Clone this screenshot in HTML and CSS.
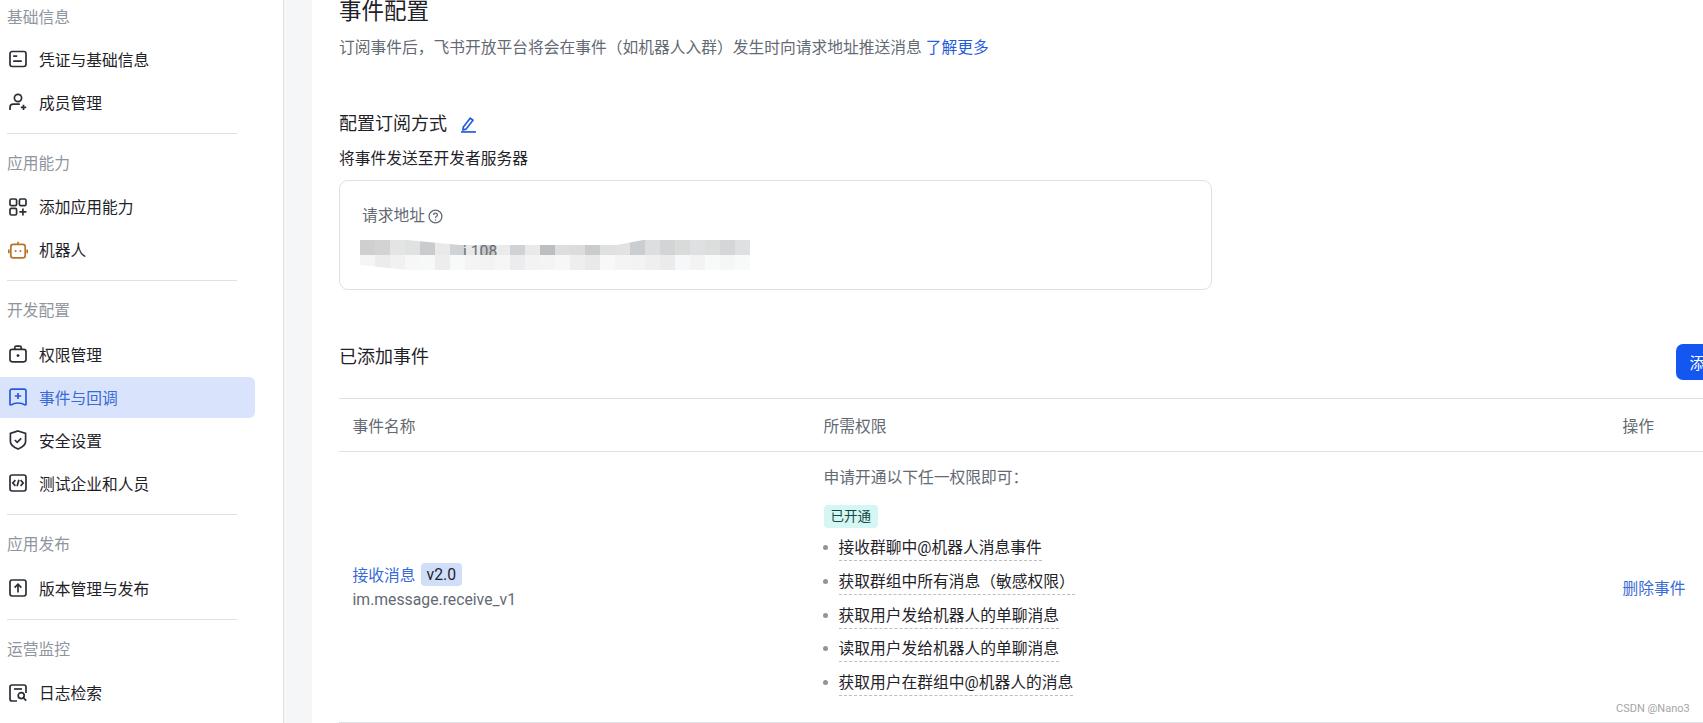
FILE: index.html
```html
<!DOCTYPE html>
<html lang="zh-CN">
<head>
  <meta charset="UTF-8">
  <title>事件配置</title>
  <link rel="stylesheet" href="styles.css">
</head>
<body>

<aside class="sidebar">
  <div class="nav-label">基础信息</div>
  <a class="nav-item">
    <svg class="nav-icon" viewBox="0 0 18 18"><rect x="1" y="1.5" width="16" height="15" rx="2.2"/><path d="M4.2 6.2h4M4.2 11.2h8.6"/></svg>
    凭证与基础信息
  </a>
  <a class="nav-item">
    <svg class="nav-icon" viewBox="0 0 18 18"><circle cx="9" cy="5" r="3.6"/><path d="M1 17v-2.6c0-2 1.6-3.2 3.4-3.2h6.4M11.8 14.4h5.4M14.5 11.8v5.2"/></svg>
    成员管理
  </a>
  <hr class="nav-line">

  <div class="nav-label">应用能力</div>
  <a class="nav-item">
    <svg class="nav-icon" viewBox="0 0 18 18"><rect x="1" y="1" width="6.6" height="6.6" rx="1.4"/><rect x="10.4" y="1" width="6.6" height="6.6" rx="1.4"/><rect x="1" y="10.4" width="6.6" height="6.6" rx="1.4"/><path d="M10.4 13.8h7M13.9 10.4v7"/></svg>
    添加应用能力
  </a>
  <a class="nav-item">
    <svg class="nav-icon nav-icon-bot" viewBox="0 0 20 18"><rect x="2.8" y="3.4" width="14.4" height="13.4" rx="2.4"/><path d="M10 .8v2.6M.8 8.6v3.6M19.2 8.6v3.6"/><circle class="dot" cx="7.6" cy="10" r="1"/><circle class="dot" cx="12.4" cy="10" r="1"/></svg>
    机器人
  </a>
  <hr class="nav-line">

  <div class="nav-label">开发配置</div>
  <a class="nav-item">
    <svg class="nav-icon" viewBox="0 0 18 18"><rect x="1" y="4.4" width="16" height="12.4" rx="2.2"/><path d="M5.8 4.4V2.6c0-.9.6-1.5 1.5-1.5h3.4c.9 0 1.5.6 1.5 1.5v1.8"/><circle class="dot" cx="9" cy="10.6" r="1.4"/></svg>
    权限管理
  </a>
  <a class="nav-item nav-item-active">
    <svg class="nav-icon" viewBox="0 0 18 18"><path d="M1 3c0-1.1.8-1.9 1.9-1.9h12.2c1.1 0 1.9.8 1.9 1.9v13.6l-1.2.3c-1.8-1.3-3.7-1.9-6.8-1.9s-5 .6-6.8 1.9L1 16.6z"/><path d="M5.8 8h6.4M9 4.9v6.2"/></svg>
    事件与回调
  </a>
  <a class="nav-item">
    <svg class="nav-icon nav-icon-shield" viewBox="0 0 18 20"><path d="M9 1l7.6 2.4v8c0 3.4-3.4 5.8-7.6 7.6-4.2-1.8-7.6-4.2-7.6-7.6v-8z"/><path d="M5.8 10l2.4 2.3 4-4"/></svg>
    安全设置
  </a>
  <a class="nav-item">
    <svg class="nav-icon" viewBox="0 0 18 18"><rect x="1" y="1" width="16" height="16" rx="2.2"/><path d="M6.4 6.2L3.8 9l2.6 2.8M11.6 6.2L14.2 9l-2.6 2.8M9.9 5.8L8.1 12.2"/></svg>
    测试企业和人员
  </a>
  <hr class="nav-line">

  <div class="nav-label">应用发布</div>
  <a class="nav-item">
    <svg class="nav-icon" viewBox="0 0 18 18"><rect x="1" y="1" width="16" height="16" rx="2.2"/><path d="M9 13.4V5.4M5.6 8.6L9 5.2l3.4 3.4"/></svg>
    版本管理与发布
  </a>
  <hr class="nav-line">

  <div class="nav-label">运营监控</div>
  <a class="nav-item">
    <svg class="nav-icon" viewBox="0 0 18 18"><path d="M8 17H3c-1.2 0-2-.8-2-2V3c0-1.2.8-2 2-2h12c1.2 0 2 .8 2 2v6"/><path d="M5 5h8"/><circle cx="12.2" cy="11.6" r="3"/><path d="M14.4 13.8l2.8 2.8"/></svg>
    日志检索
  </a>
</aside>

<div class="gutter"></div>

<main class="main">
  <div class="content">
    <h1 class="page-title">事件配置</h1>
    <p class="page-desc">订阅事件后，飞书开放平台将会在事件（如机器人入群）发生时向请求地址推送消息 <a class="link">了解更多</a></p>

    <h2 class="section-title">配置订阅方式
      <svg class="edit-icon" viewBox="0 0 16 16"><path d="M3 10.6L9.6 2l2.6 2-6.6 8.4-2.8.6z"/><path d="M1 15h14"/></svg>
    </h2>
    <p class="send-mode">将事件发送至开发者服务器</p>

    <section class="url-card">
      <div class="url-label">请求地址
        <svg class="help-icon" viewBox="0 0 14 14"><circle cx="7" cy="7" r="6"/><path d="M5.2 5.6c0-1 .8-1.7 1.8-1.7s1.8.7 1.8 1.6c0 1.2-1.8 1.3-1.8 2.8"/><circle class="dot" cx="7" cy="10.2" r=".7"/></svg>
      </div>
      <svg class="url-mosaic" viewBox="0 0 390 30" width="390" height="30">
        <g>
          <rect x="0" width="15" height="15" fill="#cfcfcf"/><rect x="15" width="15" height="15" fill="#d3d3d3"/><rect x="30" width="15" height="15" fill="#e4e4e4"/><rect x="45" width="15" height="15" fill="#e0e2e2"/><rect x="60" width="15" height="15" fill="#c9cccc"/><rect x="75" width="15" height="15" fill="#e9e9e9"/><rect x="90" width="15" height="15" fill="#cdd3d7"/><rect x="105" width="15" height="15" fill="#e8e8e8"/><rect x="120" width="15" height="15" fill="#c6c9c9"/><rect x="135" width="15" height="15" fill="#ebebeb"/><rect x="150" width="15" height="15" fill="#d0d3d6"/><rect x="165" width="15" height="15" fill="#e9e9e9"/><rect x="180" width="15" height="15" fill="#bcbec2"/><rect x="195" width="15" height="15" fill="#dcdee0"/><rect x="210" width="15" height="15" fill="#dcdcdc"/><rect x="225" width="15" height="15" fill="#cacccc"/><rect x="240" width="15" height="15" fill="#dfe1e1"/><rect x="255" width="15" height="15" fill="#e2e2e0"/><rect x="270" width="15" height="15" fill="#cbced0"/><rect x="285" width="15" height="15" fill="#dcdedf"/><rect x="300" width="15" height="15" fill="#d2d4d6"/><rect x="315" width="15" height="15" fill="#d9dbdb"/><rect x="330" width="15" height="15" fill="#dfe0e2"/><rect x="345" width="15" height="15" fill="#dcdede"/><rect x="360" width="15" height="15" fill="#d4d6d8"/><rect x="375" width="15" height="15" fill="#dfe0e2"/>
        </g>
        <text class="mosaic-text" x="103" y="17">i 108</text>
        <polygon points="47,0 283,0 257,5 100,5" fill="#fff"/>
        <g>
          <rect x="0" y="15" width="15" height="15" fill="#f5f5f5"/><rect x="15" y="15" width="15" height="15" fill="#ececec"/><rect x="30" y="15" width="15" height="15" fill="#f0f2f2"/><rect x="45" y="15" width="15" height="15" fill="#f7f7f7"/><rect x="60" y="15" width="15" height="15" fill="#f7f8f8"/><rect x="75" y="15" width="15" height="15" fill="#ededed"/><rect x="90" y="15" width="15" height="15" fill="#f8f9f9"/><rect x="105" y="15" width="15" height="15" fill="#f4f4f4"/><rect x="120" y="15" width="15" height="15" fill="#f3f3f3"/><rect x="135" y="15" width="15" height="15" fill="#f6f6f6"/><rect x="150" y="15" width="15" height="15" fill="#ececee"/><rect x="165" y="15" width="15" height="15" fill="#f3f3f3"/><rect x="180" y="15" width="15" height="15" fill="#f4f4f4"/><rect x="195" y="15" width="15" height="15" fill="#f7f7f7"/><rect x="210" y="15" width="15" height="15" fill="#eeeeee"/><rect x="225" y="15" width="15" height="15" fill="#e9e9e9"/><rect x="240" y="15" width="15" height="15" fill="#f7f8f9"/><rect x="255" y="15" width="15" height="15" fill="#f4f4f4"/><rect x="270" y="15" width="15" height="15" fill="#f3f3f3"/><rect x="285" y="15" width="15" height="15" fill="#efefef"/><rect x="300" y="15" width="15" height="15" fill="#ebebeb"/><rect x="315" y="15" width="15" height="15" fill="#f6f7f8"/><rect x="330" y="15" width="15" height="15" fill="#f3f3f3"/><rect x="345" y="15" width="15" height="15" fill="#f8f9f9"/><rect x="360" y="15" width="15" height="15" fill="#f5f6f6"/><rect x="375" y="15" width="15" height="15" fill="#f8f9f9"/>
        </g>
        <polygon points="0,25 47,30 0,30" fill="#fff"/>
      </svg>
    </section>

    <div class="events-head">
      <h2 class="section-title section-title-flush">已添加事件</h2>
      <button class="add-btn">添加事件</button>
    </div>

    <table class="events-table">
      <colgroup>
        <col class="col-name">
        <col class="col-scope">
        <col>
      </colgroup>
      <thead>
        <tr>
          <th>事件名称</th>
          <th>所需权限</th>
          <th>操作</th>
        </tr>
      </thead>
      <tbody>
        <tr>
          <td>
            <div class="event-name"><a class="link-soft">接收消息</a> <span class="version">v2.0</span></div>
            <div class="event-key">im.message.receive_v1</div>
          </td>
          <td class="scope-cell">
            <div class="scope-intro">申请开通以下任一权限即可：</div>
            <span class="tag-open">已开通</span>
            <ul class="scope-list">
              <li><span>接收群聊中@机器人消息事件</span></li>
              <li><span>获取群组中所有消息（敏感权限）</span></li>
              <li><span>获取用户发给机器人的单聊消息</span></li>
              <li><span>读取用户发给机器人的单聊消息</span></li>
              <li><span>获取用户在群组中@机器人的消息</span></li>
            </ul>
          </td>
          <td><a class="link-soft">删除事件</a></td>
        </tr>
      </tbody>
    </table>
  </div>
</main>

<div class="watermark">CSDN @Nano3</div>

</body>
</html>
```

FILE: styles.css
```css
html, body {
  height: 100%;
}

body {
  margin: 0;
  display: flex;
  height: 723px;
  overflow: hidden;
  background: #fff;
  color: #1f2329;
  font-family: 'Roboto', 'Noto Sans CJK SC', sans-serif;
  font-size: 15.75px;
}

/* left menu */
.sidebar {
  width: 283px;
  flex: none;
  padding-top: 4px;
  border-right: 1px solid #dee0e3;
}

.nav-label {
  height: 24px;
  line-height: 24px;
  margin: 0 0 10.5px 7px;
  color: #8f959e;
}

.nav-label:first-child {
  padding-top: 2px;
  margin-bottom: 8.5px;
}

.nav-item {
  display: flex;
  align-items: center;
  gap: 12px;
  width: 255px;
  height: 41px;
  margin-bottom: 2px;
  padding-left: 9px;
  box-sizing: border-box;
  border-radius: 0 6px 6px 0;
}

.nav-item-active {
  background: #d9e4fc;
  color: #3a6bd6;
}

.nav-icon {
  width: 18px;
  height: 18px;
  flex: none;
  fill: none;
  stroke: #2b2f36;
  stroke-width: 1.7;
}

.nav-item-active .nav-icon {
  stroke: #245bdb;
}

.nav-icon-bot {
  width: 20px;
  margin: 0 -1px;
  stroke: #b8742a;
}

.nav-icon-shield {
  height: 20px;
}

.nav-icon .dot {
  fill: currentColor;
  stroke: none;
}

.nav-icon-bot .dot {
  fill: #b8742a;
}

.nav-line {
  width: 230px;
  height: 1px;
  margin: 10.2px 0 18px 7px;
  border: 0;
  background: #dee0e3;
}

.gutter {
  width: 28px;
  flex: none;
  background: #f5f6f7;
}

/* main column */
.main {
  flex: 1;
  min-width: 0;
  overflow: hidden;
  padding-left: 27px;
}

.content {
  width: 1427px;
}

.page-title {
  margin: 0;
  font-size: 22.5px;
  font-weight: 400;
  line-height: 22px;
}

.page-desc {
  margin: 14px 0 0;
  line-height: 24px;
  color: #646a73;
}

.link {
  color: #245bdb;
}

.link-soft {
  color: #3a6bd6;
}

.section-title {
  display: flex;
  align-items: center;
  gap: 13px;
  margin: 51px 0 0;
  font-size: 18px;
  font-weight: 400;
  line-height: 26px;
}

.section-title-flush {
  margin-top: 0;
}

.edit-icon {
  width: 17px;
  height: 17px;
  fill: none;
  stroke: #245bdb;
  stroke-width: 1.6;
}

.send-mode {
  margin: 9.5px 0;
  line-height: 24px;
}

.url-card {
  width: 873px;
  height: 110px;
  box-sizing: border-box;
  padding: 23px 0 0 20px;
  border: 1px solid #dee0e3;
  border-radius: 9px;
}

.url-label {
  display: flex;
  align-items: center;
  gap: 3px;
  margin-left: 2px;
  line-height: 24px;
  color: #646a73;
}

.help-icon {
  width: 15px;
  height: 15px;
  fill: none;
  stroke: #646a73;
  stroke-width: 1.2;
}

.help-icon .dot {
  fill: #646a73;
  stroke: none;
}

.url-mosaic {
  display: block;
  margin-top: 12px;
}

.mosaic-text {
  font-size: 15.75px;
  fill: #6b6f76;
}

.events-head {
  display: flex;
  justify-content: space-between;
  align-items: flex-start;
  margin-top: 54px;
}

.add-btn {
  width: 90px;
  height: 36px;
  padding: 0;
  border: none;
  border-radius: 7px;
  background: #1456f0;
  color: #fff;
  font: inherit;
}

/* events table */
.events-table {
  width: 100%;
  margin-top: 18px;
  table-layout: fixed;
  border-collapse: collapse;
}

.col-name {
  width: 471px;
}

.col-scope {
  width: 799px;
}

.events-table th {
  height: 52px;
  padding: 0 0 0 13.5px;
  border-top: 1px solid #dee0e3;
  border-bottom: 1px solid #dee0e3;
  color: #646a73;
  font-weight: 400;
  text-align: left;
}

.events-table td {
  height: 270px;
  padding: 0 0 0 13.5px;
  border-bottom: 1px solid #dee0e3;
  vertical-align: middle;
}

.events-table .scope-cell {
  height: 256px;
  padding-top: 14px;
  vertical-align: top;
}

.event-name {
  display: flex;
  align-items: center;
  gap: 5px;
}

.version {
  padding: 0 6px;
  height: 23px;
  line-height: 23px;
  border-radius: 4px;
  background: #d1defa;
  font-size: 15.75px;
}

.event-key {
  margin-top: 2px;
  line-height: 24px;
  color: #646a73;
}

.scope-intro {
  line-height: 24px;
  color: #646a73;
}

.tag-open {
  display: inline-block;
  height: 23px;
  margin-top: 15px;
  padding: 0 7px;
  line-height: 23px;
  border-radius: 4px;
  background: #d5f6f2;
  color: #0f4a42;
  font-size: 13.5px;
}

.scope-list {
  margin: 3px 0 0;
  padding: 0;
  list-style: none;
}

.scope-list li {
  position: relative;
  height: 33.75px;
  line-height: 33.75px;
  padding-left: 15px;
}

.scope-list li::before {
  content: "";
  position: absolute;
  left: -1px;
  top: 14px;
  width: 5px;
  height: 5px;
  border-radius: 50%;
  background: #8f959e;
}

.scope-list span {
  display: inline-block;
  line-height: 24px;
  border-bottom: 1px dashed #bbbfc4;
}

.watermark {
  position: absolute;
  left: 1616px;
  top: 702px;
  color: #a6a6a6;
  font-size: 11px;
  line-height: 14px;
}
```
